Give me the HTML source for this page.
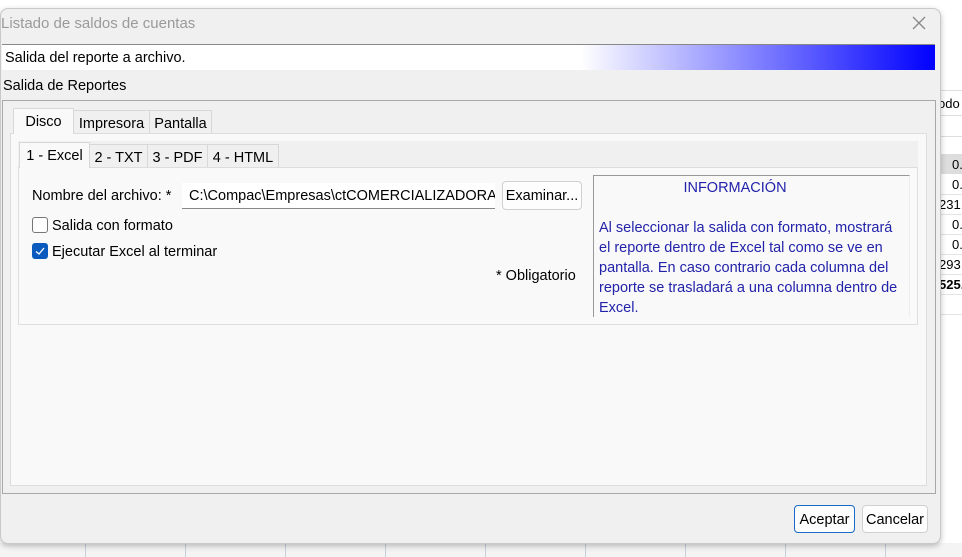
<!DOCTYPE html>
<html><head><meta charset="utf-8"><style>
*{box-sizing:border-box;margin:0;padding:0}
body{width:962px;height:557px;overflow:hidden;background:#fff;font-family:"Liberation Sans",sans-serif;font-size:14.5px;color:#000;position:relative}
.a{position:absolute;white-space:nowrap}
.dlg{position:absolute;left:0;top:8px;width:941px;height:536px;background:#f0f0f0;border:1px solid #c8c8c8;border-radius:8px;box-shadow:0 2px 6px rgba(0,0,0,.25)}
.tab{position:absolute;border:1px solid #d8d8d8;border-bottom:none;background:#f0f0f0;text-align:center;line-height:24px}
.btn{position:absolute;border:1px solid #d0d0d0;border-radius:4px;background:#fdfdfd;text-align:center}
.info{color:#2222aa}
</style></head><body>
<div class="a" style="left:941px;top:90px;width:21px;height:1px;background:#ddd"></div>
<div class="a" style="left:938px;top:96px;font-size:13px">odo</div>
<div class="a" style="left:941px;top:115px;width:21px;height:1px;background:#ddd"></div>
<div class="a" style="left:941px;top:136px;width:21px;height:1px;background:#ddd"></div>
<div class="a" style="left:941px;top:154px;width:21px;height:20px;background:#ddd"></div>
<div class="a" style="left:952px;top:157px;font-size:13px">0.</div>
<div class="a" style="left:952px;top:177px;font-size:13px">0.</div>
<div class="a" style="left:939px;top:197px;font-size:13px">231.</div>
<div class="a" style="left:952px;top:217px;font-size:13px">0.</div>
<div class="a" style="left:952px;top:237px;font-size:13px">0.</div>
<div class="a" style="left:939px;top:257px;font-size:13px">293.</div>
<div class="a" style="left:939px;top:277px;font-size:13px;font-weight:bold">525.</div>
<div class="a" style="left:941px;top:194px;width:21px;height:1px;background:#e4e4e4"></div>
<div class="a" style="left:941px;top:214px;width:21px;height:1px;background:#e4e4e4"></div>
<div class="a" style="left:941px;top:234px;width:21px;height:1px;background:#e4e4e4"></div>
<div class="a" style="left:941px;top:254px;width:21px;height:1px;background:#e4e4e4"></div>
<div class="a" style="left:941px;top:274px;width:21px;height:1px;background:#e4e4e4"></div>
<div class="a" style="left:941px;top:294px;width:21px;height:1px;background:#e4e4e4"></div>
<div class="a" style="left:941px;top:314px;width:21px;height:1px;background:#e4e4e4"></div>
<div class="a" style="left:0;top:543px;width:962px;height:14px;background:#f4f4f4"></div>
<div class="a" style="left:85px;top:543px;width:1px;height:14px;background:#c8d0dc"></div>
<div class="a" style="left:185px;top:543px;width:1px;height:14px;background:#c8d0dc"></div>
<div class="a" style="left:285px;top:543px;width:1px;height:14px;background:#c8d0dc"></div>
<div class="a" style="left:385px;top:543px;width:1px;height:14px;background:#c8d0dc"></div>
<div class="a" style="left:485px;top:543px;width:1px;height:14px;background:#c8d0dc"></div>
<div class="a" style="left:585px;top:543px;width:1px;height:14px;background:#c8d0dc"></div>
<div class="a" style="left:685px;top:543px;width:1px;height:14px;background:#c8d0dc"></div>
<div class="a" style="left:785px;top:543px;width:1px;height:14px;background:#c8d0dc"></div>
<div class="a" style="left:885px;top:543px;width:1px;height:14px;background:#c8d0dc"></div>

<div class="dlg"></div>
<div class="a" style="left:1px;top:15px;color:#9a9a9a;font-size:15px">Listado de saldos de cuentas</div>
<svg class="a" style="left:912px;top:16px" width="14" height="14"><path d="M1 1L13 13M13 1L1 13" stroke="#888" stroke-width="1.3"/></svg>
<div class="a" style="left:2px;top:44px;width:933px;height:26px;background:linear-gradient(90deg,#fff 0%,#fff 62%,#0000ff 100%);border-top:1px solid #888"></div>
<div class="a" style="left:5px;top:50px">Salida del reporte a archivo.</div>
<div class="a" style="left:3px;top:78px">Salida de Reportes</div>

<div class="a" style="left:2px;top:100px;width:934px;height:394px;border:1px solid #a8a8a8;background:#f0f0f0"></div>
<div class="a" style="left:10px;top:133px;width:917px;height:353px;border:1px solid #ddd;background:#f9f9f9"></div>
<div class="tab" style="left:13px;top:108px;width:61px;height:26px;background:#f9f9f9;line-height:26px">Disco</div>
<div class="tab" style="left:73px;top:110px;width:77px;height:23px;line-height:27px">Impresora</div>
<div class="tab" style="left:149px;top:110px;width:63px;height:23px;line-height:27px">Pantalla</div>

<div class="a" style="left:18px;top:141px;width:900px;height:27px;background:#f0f0f0"></div>
<div class="a" style="left:18px;top:167px;width:900px;height:158px;border:1px solid #ddd;background:#f9f9f9"></div>
<div class="tab" style="left:19px;top:142px;width:71px;height:26px;background:#f9f9f9;line-height:27px">1 - Excel</div>
<div class="tab" style="left:89px;top:144px;width:59px;height:23px;line-height:26px">2 - TXT</div>
<div class="tab" style="left:147px;top:144px;width:61px;height:23px;line-height:26px">3 - PDF</div>
<div class="tab" style="left:207px;top:144px;width:72px;height:23px;line-height:26px">4 - HTML</div>

<div class="a" style="left:32px;top:188px">Nombre del archivo: *</div>
<div class="a" style="left:182px;top:183px;width:313px;height:26px;background:#fff;border-bottom:1px solid #888;overflow:hidden;padding:5px 0 0 7px">C:\Compac\Empresas\ctCOMERCIALIZADORA</div>
<div class="btn" style="left:502px;top:181px;width:80px;height:29px;line-height:29px">Examinar...</div>
<div class="a" style="left:32px;top:217px;width:16px;height:16px;border:1px solid #777;border-radius:3px;background:#fff"></div>
<div class="a" style="left:52px;top:218px">Salida con formato</div>
<div class="a" style="left:32px;top:243px;width:16px;height:16px;border-radius:3px;background:#0a5bbd"></div>
<svg class="a" style="left:32px;top:243px" width="16" height="16"><path d="M4 8.5L7 11L12 5" stroke="#fff" stroke-width="1.3" fill="none"/></svg>
<div class="a" style="left:52px;top:244px">Ejecutar Excel al terminar</div>
<div class="a" style="left:496px;top:268px">* Obligatorio</div>

<div class="a" style="left:593px;top:175px;width:317px;height:142px;border-top:1px solid #999;border-left:1px solid #999;border-right:1px solid #eee;background:#f9f9f9"></div>
<div class="a info" style="left:593px;top:180px;width:284px;text-align:center">INFORMACIÓN</div>
<div class="a info" style="left:599px;top:218px;line-height:20px;white-space:normal;width:302px">Al seleccionar la salida con formato, mostrará el reporte dentro de Excel tal como se ve en pantalla. En caso contrario cada columna del reporte se trasladará a una columna dentro de Excel.</div>

<div class="btn" style="left:794px;top:505px;width:61px;height:28px;line-height:28px;border:1px solid #1a6ac8">Aceptar</div>
<div class="btn" style="left:862px;top:505px;width:66px;height:28px;line-height:28px">Cancelar</div>
</body></html>
